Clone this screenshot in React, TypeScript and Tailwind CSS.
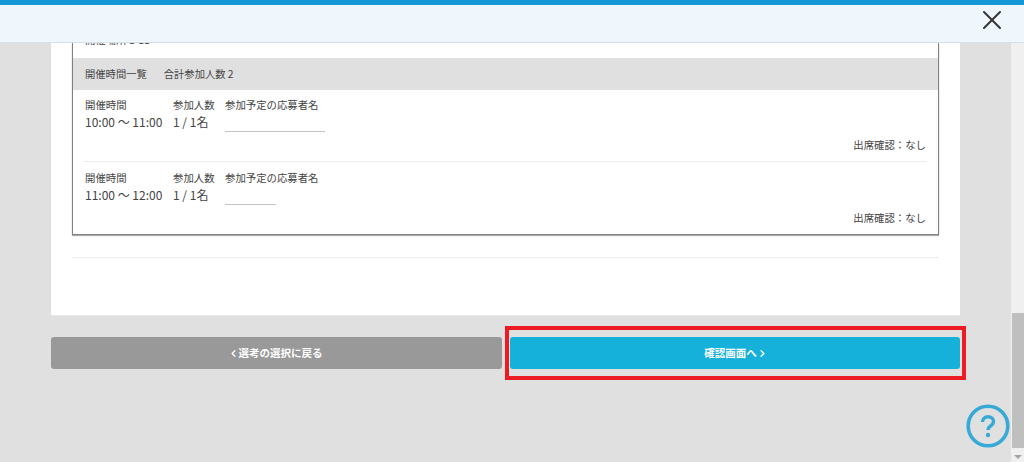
import { ChevronLeft, ChevronRight, X } from "lucide-react";

const FONT = "font-['Noto_Sans_CJK_JP','Noto_Sans',sans-serif]";

const slots = [
  { time: "10:00 〜 11:00", line: "w-[100px]", top: "pt-[7px]" },
  { time: "11:00 〜 12:00", line: "w-[51px]", top: "pt-[8px]" },
];

function SlotRow({ slot }: { slot: (typeof slots)[number] }) {
  return (
    <div className={`${slot.top} pb-[8px] px-3`}>
      <div className="flex">
        <div className="w-[88px]">
          <p className="text-[10.4px] leading-[16px]">開催時間</p>
          <p className="text-[12px] leading-[19px] -mt-[1px] whitespace-nowrap">{slot.time}</p>
        </div>
        <div className="w-[52px]">
          <p className="text-[10.4px] leading-[16px]">参加人数</p>
          <p className="text-[12px] leading-[19px] -mt-[1px] whitespace-nowrap">1 / 1名</p>
        </div>
        <div>
          <p className="text-[10.4px] leading-[16px] whitespace-nowrap">参加予定の応募者名</p>
          <div className={`${slot.line} h-[19px] border-b border-[#c4c4c4]`} />
        </div>
      </div>
      <div className="mt-[5px] text-right text-[10.4px] leading-[16px]">
        出席確認：なし
      </div>
    </div>
  );
}

export default function App() {
  return (
    <div className={`${FONT} relative flex flex-col h-[462px] w-[1024px] overflow-hidden bg-[#e0e0e0] text-[#444]`}>
      <header className="h-[43px] shrink-0 border-t-[5px] border-b border-t-[#1598d6] border-b-[#d5dfee] bg-[#f0f7fc] flex items-start justify-end pr-[16px]">
        <X className="w-[32px] h-[32px] -mt-[1px] text-[#333]" strokeWidth={1.5} />
      </header>

      <div className="flex flex-1 min-h-0">
        <main className="w-[1011px] pl-[51px]">
          <div className="w-[909px] h-[273px] bg-white border-b border-[#e8e8e8] px-[21px] overflow-hidden">
            <div className="border-x border-b border-[#808080] shadow-[0_1px_1px_#aaa]">
              {/* line scrolled under the header */}
              <div className="flow-root h-[15px] pl-3">
                <p className="-mt-[11px] text-[10.4px] leading-[16px]">開催場所 1-11</p>
              </div>
              <div className="h-[32px] flex items-center bg-[#e0e0e0] pl-3 text-[10.3px] gap-[17px]">
                <span>開催時間一覧</span>
                <span>合計参加人数 2</span>
              </div>
              <SlotRow slot={slots[0]} />
              <div className="mx-[11px] border-t border-[#ececec]" />
              <SlotRow slot={slots[1]} />
            </div>
            <div className="mt-[22px] border-t border-[#ececec]" />
          </div>

          <div className="w-[909px] mt-[21px] flex gap-[8px]">
            <button className="w-[451px] h-[32px] pr-[3px] rounded-[3px] bg-[#999] text-white text-[10.5px] font-bold flex items-center justify-center">
              <ChevronLeft className="w-[11px] h-[11px]" strokeWidth={3} />
              選考の選択に戻る
            </button>
            <button className="w-[450px] h-[32px] pl-[2px] rounded-[3px] bg-[#15b1da] text-white text-[10.5px] font-bold flex items-center justify-center">
              確認画面へ
              <ChevronRight className="w-[11px] h-[11px]" strokeWidth={3} />
            </button>
          </div>
        </main>

        <aside className="relative w-[13px] bg-[#f0f0f0]">
          <div className="absolute left-[1px] right-0 top-[270px] h-[135px] bg-[#bfbfbf]" />
          <div className="absolute left-[3px] bottom-[3px] w-0 h-0 border-x-[4px] border-t-[4px] border-x-transparent border-t-[#a3a3a3]" />
        </aside>
      </div>

      {/* red annotation round the next button */}
      <div className="absolute left-[505px] top-[326px] w-[461px] h-[54px] border-4 border-[#ed1c24]" />

      <svg className="absolute left-[966px] top-[404px]" width="44" height="44" viewBox="0 0 44 44" fill="none">
        <circle cx="22" cy="22" r="19.8" stroke="#36a9d6" strokeWidth="3.6" />
        <path d="M16.5 18c0-3.2 2.4-5.2 5.5-5.2s5.5 1.9 5.5 4.7c0 2.3-1.4 3.4-3 4.5-1.6 1.1-2.5 2-2.5 4" stroke="#36a9d6" strokeWidth="3.4" />
        <circle cx="22" cy="31" r="2.2" fill="#36a9d6" />
      </svg>
    </div>
  );
}
